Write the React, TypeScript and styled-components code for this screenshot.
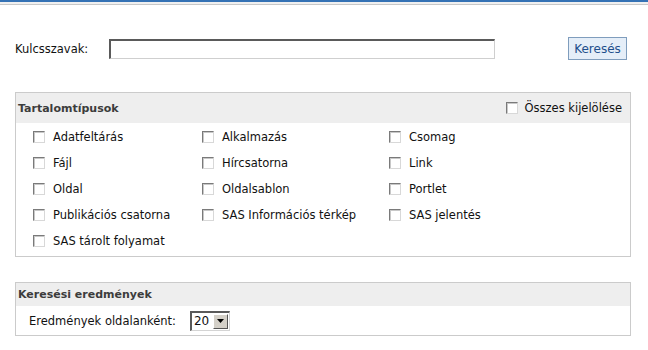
import React from "react";
import styled, { createGlobalStyle } from "styled-components";

const Global = createGlobalStyle`
  html, body { margin: 0; padding: 0; background: #fff; }
  body { font-family: "DejaVu Sans", Verdana, sans-serif; font-size: 11.5px; color: #111; }
`;

const Page = styled.div`
  width: 648px;
  height: 350px;
  overflow: hidden;
  display: flex;
  flex-direction: column;
`;

const TopBar = styled.div`
  height: 2px;
  background: #3572b5;
  border-bottom: 2px solid #f0f0f0;
  box-shadow: 0 1px 0 #c8c8c8;
  margin-bottom: 1px;
`;

const SearchRow = styled.div`
  display: flex;
  align-items: center;
  padding: 32px 20px 0 15px;
  height: 23px;
`;

const Label = styled.label`
  width: 94px;
`;

const TextInput = styled.input`
  box-sizing: border-box;
  width: 386px;
  height: 20px;
  border-style: solid;
  border-width: 2px 1px 1px 2px;
  border-color: #5a5a5a #cfcfcf #cfcfcf #5a5a5a;
  padding: 0 3px;
  font: inherit;
  outline: none;
`;

const Spacer = styled.div`
  flex: 1;
`;

const Button = styled.button`
  box-sizing: border-box;
  height: 23px;
  width: 59px;
  margin-right: 1px;
  background: #e5eef8;
  border: 1px solid #7f9dbd;
  color: #1e4f8c;
  font-family: inherit;
  font-size: 12px;
  padding: 0;
`;

const Panel = styled.section<{ $top: number }>`
  margin: ${(p) => p.$top}px 17px 0 15px;
  border: 1px solid #cbcbcb;
`;

const PanelHeader = styled.div<{ $h: number }>`
  height: ${(p) => p.$h}px;
  background: #eeeeee;
  display: flex;
  align-items: center;
  justify-content: space-between;
  padding: 0 8px 0 2px;
  font-weight: bold;
  font-size: 11px;
  color: #3c3c3c;
`;

const SelectAll = styled.label`
  display: flex;
  align-items: center;
  gap: 7px;
  font-weight: normal;
  font-size: 11.5px;
  color: #111;
`;

const Grid = styled.div`
  display: grid;
  grid-template-columns: 169px 187px 1fr;
  grid-auto-rows: 26px;
  padding: 1px 0 2px 17px;
`;

const Item = styled.label`
  display: flex;
  align-items: center;
  gap: 8px;
`;

const Box = styled.span`
  box-sizing: border-box;
  width: 12px;
  height: 12px;
  display: inline-block;
  background: #fff;
  border-style: solid;
  border-width: 1px;
  border-color: #7a7a7a #d8d8d8 #d8d8d8 #7a7a7a;
  box-shadow: inset 1px 1px 0 #c8c8c8;
  flex: none;
`;

const ResultRow = styled.div`
  height: 29px;
  display: flex;
  align-items: center;
  padding-left: 13px;
  gap: 14px;
`;

const Select = styled.div`
  box-sizing: border-box;
  width: 40px;
  height: 20px;
  display: flex;
  align-items: stretch;
  border-style: solid;
  border-width: 2px 1px 1px 2px;
  border-color: #5a5a5a #d4d4d4 #d4d4d4 #5a5a5a;
  background: #fff;
`;

const SelectValue = styled.span`
  flex: 1;
  padding-left: 2px;
  line-height: 17px;
  font-size: 12px;
`;

const Arrow = styled.span`
  width: 15px;
  margin: 1px;
  background: #d4d0c8;
  border-style: solid;
  border-width: 1px;
  border-color: #fff #555 #555 #fff;
  box-sizing: border-box;
  display: flex;
  align-items: center;
  justify-content: center;
`;

const items = [
  "Adatfeltárás",
  "Alkalmazás",
  "Csomag",
  "Fájl",
  "Hírcsatorna",
  "Link",
  "Oldal",
  "Oldalsablon",
  "Portlet",
  "Publikációs csatorna",
  "SAS Információs térkép",
  "SAS jelentés",
  "SAS tárolt folyamat",
];

export default function App() {
  return (
    <Page>
      <Global />
      <TopBar />
      <SearchRow>
        <Label>Kulcsszavak:</Label>
        <TextInput />
        <Spacer />
        <Button>Keresés</Button>
      </SearchRow>
      <Panel $top={32}>
        <PanelHeader $h={30}>
          <span>Tartalomtípusok</span>
          <SelectAll>
            <Box />
            Összes kijelölése
          </SelectAll>
        </PanelHeader>
        <Grid>
          {items.map((t) => (
            <Item key={t}>
              <Box />
              {t}
            </Item>
          ))}
        </Grid>
      </Panel>
      <Panel $top={25}>
        <PanelHeader $h={23}>
          <span>Keresési eredmények</span>
        </PanelHeader>
        <ResultRow>
          <span>Eredmények oldalanként:</span>
          <Select>
            <SelectValue>20</SelectValue>
            <Arrow>
              <svg width="7" height="4" viewBox="0 0 7 4">
                <path d="M0 0h7L3.5 4z" fill="#000" />
              </svg>
            </Arrow>
          </Select>
        </ResultRow>
      </Panel>
    </Page>
  );
}
